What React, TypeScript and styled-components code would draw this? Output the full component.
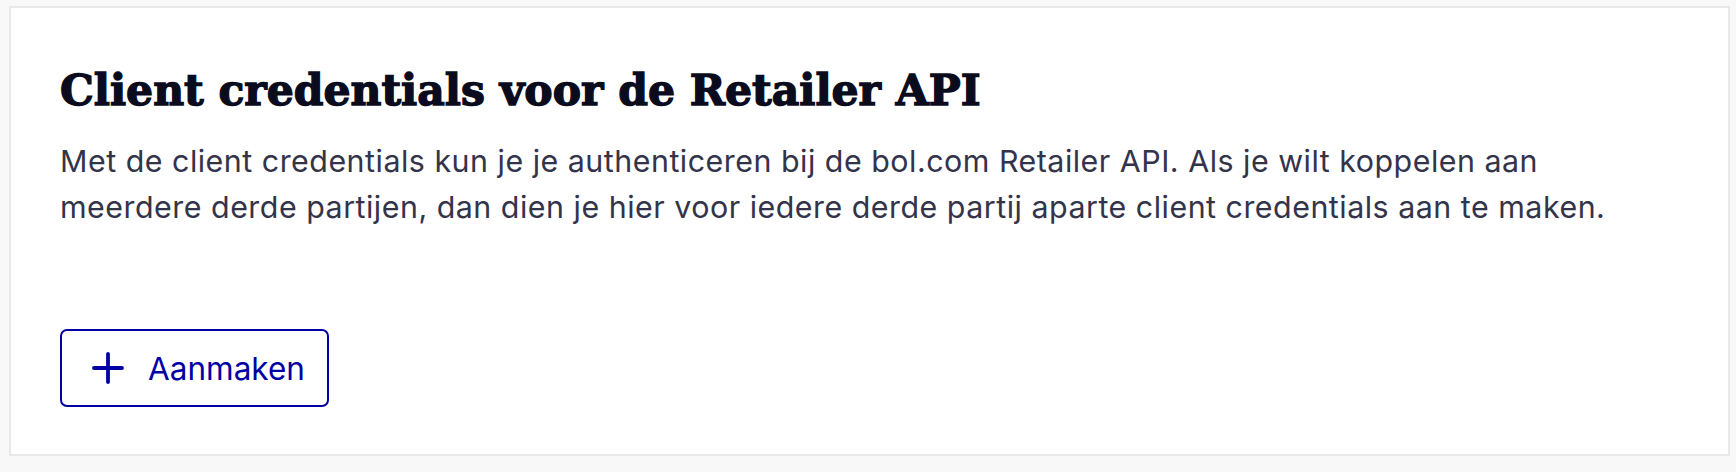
import styled, { createGlobalStyle } from "styled-components";

const GlobalStyle = createGlobalStyle`
  html, body {
    margin: 0;
    padding: 0;
    background: #f8f8f8;
  }
  * {
    box-sizing: border-box;
  }
`;

const Page = styled.div`
  padding: 6px 6px 0 9px;
`;

const Card = styled.section`
  background: #ffffff;
  border: 2px solid #e8e8e8;
  box-shadow: 0 11px 0 -5px #e9e9e9, 0 4px 0 -2px #dddddd;
  padding: 56px 48px 47px 49px;
  display: flex;
  flex-direction: column;
`;

const Title = styled.h2`
  margin: 0;
  font-family: "DejaVu Serif", "Liberation Serif", serif;
  font-weight: 700;
  font-size: 42.5px;
  line-height: 52px;
  color: #0b0b1e;
  -webkit-text-stroke: 1.4px #0b0b1e;
`;

const Intro = styled.p`
  margin: 22px 0 0;
  max-width: 1590px;
  font-family: Inter, "Noto Sans", sans-serif;
  font-size: 30.4px;
  letter-spacing: 0.5px;
  line-height: 46px;
  color: #33334a;
`;

const Actions = styled.div`
  display: flex;
  margin-top: 99px;
`;

const OutlineButton = styled.button`
  display: inline-flex;
  align-items: center;
  gap: 24px;
  height: 78px;
  padding: 0 22px 0 30px;
  border: 2px solid #0000a4;
  border-radius: 7px;
  background: #ffffff;
  color: #0000a4;
  font-family: Inter, "Noto Sans", sans-serif;
  font-size: 31.5px;
  cursor: pointer;
`;

const PlusIcon = () => (
  <svg width="32" height="32" viewBox="0 0 32 32" fill="none" aria-hidden="true">
    <path d="M16 2v28M2 16h28" stroke="currentColor" strokeWidth="3.8" strokeLinecap="round" />
  </svg>
);

export default function App() {
  return (
    <>
      <GlobalStyle />
      <Page>
        <Card>
          <Title>Client credentials voor de Retailer API</Title>
          <Intro>
            Met de client credentials kun je je authenticeren bij de bol.com Retailer API. Als je wilt koppelen aan
            meerdere derde partijen, dan dien je hier voor iedere derde partij aparte client credentials aan te maken.
          </Intro>
          <Actions>
            <OutlineButton type="button">
              <PlusIcon />
              Aanmaken
            </OutlineButton>
          </Actions>
        </Card>
      </Page>
    </>
  );
}
